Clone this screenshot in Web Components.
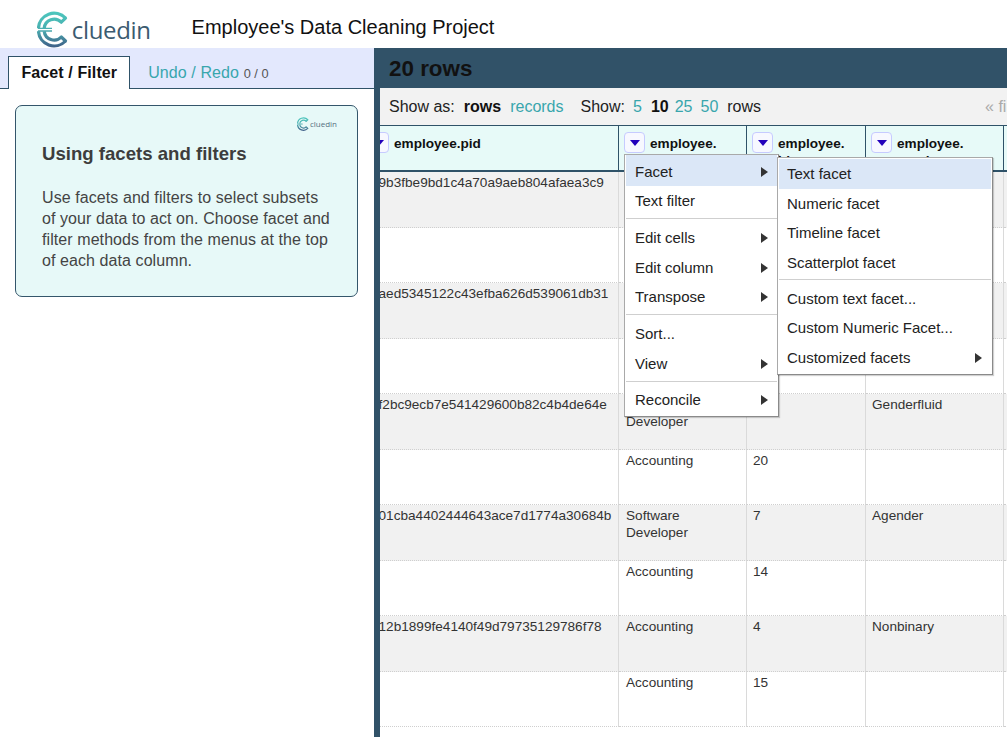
<!DOCTYPE html>
<html lang="en">
<head>
<meta charset="utf-8">
<title>Employee's Data Cleaning Project</title>
<style>
  html, body { margin: 0; height: 737px; overflow: hidden; background: #fff; }
  body { font-family: "Liberation Sans", Arial, sans-serif; color: #222; }
</style>
</head>
<body>
<template id="logo-t">
  <style>
    :host { display: inline-flex; align-items: center; gap: var(--gap, 2.8px); color: #3b5b70; }
    svg { height: var(--h, 37px); width: calc(var(--h, 37px) * .865); display: block; flex: none; }
    span { font: 400 var(--fs, 24px)/1 "Open Sans", sans-serif; letter-spacing: var(--ls, -.35px); }
  </style>
  <svg viewBox="0 0 32 37" aria-hidden="true">
    <path d="M28.5 7.2A15.6 15.6 0 0 0 1.5 17.2" fill="none" stroke="url(#g)" stroke-width="3.2"/>
    <path d="M1.5 20.2A15.6 15.6 0 0 0 28.5 30" fill="none" stroke="url(#g)" stroke-width="3.2"/>
    <path d="M24.3 11.2A10 10 0 0 0 7.2 17.2" fill="none" stroke="url(#g)" stroke-width="3.2"/>
    <path d="M7.2 20.2A10 10 0 0 0 24.3 26" fill="none" stroke="url(#g)" stroke-width="3.2"/>
    <path d="M28.5 7.2L24.3 11.2M28.5 30L24.3 26" fill="none" stroke="url(#g)" stroke-width="3.2" stroke-linecap="round"/>
    <path d="M1 17.4H15M1 20H15" stroke="url(#g)" stroke-width="1.3"/>
    <defs>
      <linearGradient id="g" gradientUnits="userSpaceOnUse" x1="0" y1="1" x2="0" y2="36">
        <stop offset="0" stop-color="#4cc6bd"/><stop offset=".5" stop-color="#4aaeb0"/><stop offset="1" stop-color="#3f5f88"/>
      </linearGradient>
    </defs>
  </svg>
  <span>cluedin</span>
</template>

<template id="header-t">
  <style>
    :host { display: flex; align-items: center; height: 48px; padding: 6px 0 0 37px; box-sizing: border-box; background: #fff; }
    h1 { margin: 0 0 0 41px; font: 400 20px/1 "Liberation Sans", Arial, sans-serif; color: #111; white-space: nowrap; }
    cd-logo { position: relative; top: 2.5px; }
  </style>
  <cd-logo></cd-logo>
  <h1><slot></slot></h1>
</template>

<template id="tabs-t">
  <style>
    :host { display: block; width: 374px; flex: none; background: #fff; }
    .bar { display: flex; height: 41px; box-sizing: border-box; padding: 8px 0 0 8px; background: #e3e8fd; border-bottom: 1px solid #2f5268; }
    .tab { height: 33px; box-sizing: border-box; padding: 7px 12px 0 12.5px; font: 700 16px/18px "Liberation Sans", Arial, sans-serif; color: #111; background: #fff; border: 1px solid #2f5268; border-bottom: 0; letter-spacing: .1px; }
    .other { margin-left: 18px; padding-top: 8px; font: 400 16px/18px "Liberation Sans", Arial, sans-serif; color: #38a6ad; letter-spacing: .1px; }
    .other small { font-size: 12.8px; color: #555; letter-spacing: 0; }
    .body { padding: 16px 16px 0 15px; }
  </style>
  <div class="bar">
    <div class="tab">Facet / Filter</div>
    <div class="other">Undo / Redo <small>0 / 0</small></div>
  </div>
  <div class="body"><slot></slot></div>
</template>

<template id="card-t">
  <style>
    :host { display: block; box-sizing: border-box; height: 192px; background: #e7f9f8; border: 1px solid #34566b; border-radius: 7px; padding: 11px 20px 0 26px; color: #444; }
    .top { display: flex; justify-content: flex-end; }
    cd-logo { --h: 14px; --fs: 8px; --ls: 0; --gap: 1px; color: #55707f; }
    h3 { margin: 10px 0 0; font: 700 18.6px/26px "Liberation Sans", Arial, sans-serif; color: #3d3d3d; }
    p { margin: 20px 5px 0 0; font: 400 16px/21px "Liberation Sans", Arial, sans-serif; letter-spacing: .08px; }
  </style>
  <div class="top"><cd-logo></cd-logo></div>
  <h3><slot name="title"></slot></h3>
  <p><slot></slot></p>
</template>

<template id="toolbar-t">
  <style>
    :host { display: flex; align-items: center; height: 37px; box-sizing: border-box; padding-left: 9px; background: #f2f2f2; font: 400 16px/20px "Liberation Sans", Arial, sans-serif; color: #222; white-space: nowrap; overflow: hidden; }
    b { color: #111; }
    .l { color: #38a6ad; }
    .g { color: #aaa; }
    span, b { flex: none; }
  </style>
  <span>Show as:</span>
  <b style="margin-left:9px">rows</b>
  <span class="l" style="margin-left:9px">records</span>
  <span style="margin-left:17px">Show:</span>
  <span class="l" style="margin-left:8px">5</span>
  <b style="margin-left:9px">10</b>
  <span class="l" style="margin-left:6px">25</span>
  <span class="l" style="margin-left:8px">50</span>
  <span style="margin-left:9px">rows</span>
  <span class="g" style="margin-left:224px">« first</span>
</template>

<template id="colhead-t">
  <style>
    :host { display: flex; align-items: flex-start; box-sizing: border-box; height: 47px; overflow: hidden; background: #e7faf8; border-top: 1px solid #2f5268; border-bottom: 2px solid #2f5268; border-right: 1px solid #2f5268; padding: 6px 0 0 5px; font: 700 13.6px/17px "Liberation Sans", Arial, sans-serif; color: #111; }
    .btn { flex: none; width: 21px; height: 21px; box-sizing: border-box; margin-right: 5px; background: #f7f8ff; border: 1.5px solid #c6cbff; border-radius: 4px; display: flex; align-items: center; justify-content: center; }
    .btn i { display: block; width: 0; height: 0; border-left: 5.5px solid transparent; border-right: 5.5px solid transparent; border-top: 6.5px solid #2200bb; margin-top: 1px; }
    .t { padding-top: 3px; }
  </style>
  <div class="btn"><i></i></div>
  <div class="t"><slot></slot></div>
</template>

<template id="cell-t">
  <style>
    :host { display: block; box-sizing: border-box; height: 55.5px; padding: 2px 7px 0 var(--pl, 6px); overflow: hidden; border-right: 1px solid #dadada; border-bottom: 1px dotted #cfcfcf; font: 400 13.6px/17px "Liberation Sans", Arial, sans-serif; color: #333; }
    :host([odd]) { background: #f1f1f1; }
    :host([bare]) { border-right: 0; padding: 2px 0 0; }
  </style>
  <slot></slot>
</template>

<template id="menu-t">
  <style>
    :host { display: block; position: absolute; box-sizing: border-box; background: #fff; border: 1px solid #a9a9a9; border-right-color: #8a8a8a; border-bottom-color: #8a8a8a; box-shadow: 1px 1px 1px rgba(0,0,0,.18); padding: 0 1px; font: 400 15px/20px "Liberation Sans", Arial, sans-serif; color: #222; z-index: 3; }
  </style>
  <slot></slot>
</template>

<template id="item-t">
  <style>
    :host { display: flex; align-items: center; justify-content: space-between; box-sizing: border-box; height: 29.5px; padding: 1px 9px 0 var(--pl, 9px); white-space: nowrap; }
    :host([hl]) { background: #dbe7f7; }
    i { display: none; width: 0; height: 0; border-top: 5.5px solid transparent; border-bottom: 5.5px solid transparent; border-left: 7px solid #333; }
    :host([sub]) i { display: block; }
  </style>
  <span><slot></slot></span><i></i>
</template>

<template id="sep-t">
  <style>
    :host { display: block; height: 1px; margin: 2.9px 0 3.5px; background: #cfcfcf; }
  </style>
</template>

<template id="panel-t">
  <style>
    :host { display: block; position: relative; flex: 1; min-width: 0; height: 689px; box-sizing: border-box; border-left: 6px solid #315268; background: #fff; overflow: hidden; }
    .top { height: 40px; box-sizing: border-box; padding-left: 9px; background: #315268; font: 700 22.4px/42px "Liberation Sans", Arial, sans-serif; color: #111; }
  </style>
  <div class="top"><slot name="count"></slot></div>
  <slot></slot>
</template>

<template id="table-t">
  <style>
    :host { display: block; overflow: hidden; }
    .grid { display: grid; grid-template-columns: 256px 128px 119px 138px 60px; margin-left: -17px; width: 701px; }
  </style>
  <div class="grid"><slot></slot></div>
</template>

<app-shell>
  <app-header>Employee's Data Cleaning Project</app-header>
  <main style="display:flex">
    <side-tabs>
      <help-card>
        <span slot="title">Using facets and filters</span>
        Use facets and filters to select subsets of your data to act on. Choose facet and filter methods from the menus at the top of each data column.
      </help-card>
    </side-tabs>
    <data-panel>
      <span slot="count">20 rows</span>
      <view-toolbar></view-toolbar>
      <data-table id="tbl"></data-table>
      <pop-menu style="left:244px;top:106px;width:154.5px;height:263px">
        <menu-row hl sub style="height:31px;padding-top:3px">Facet</menu-row>
        <menu-row>Text filter</menu-row>
        <menu-sep></menu-sep>
        <menu-row sub>Edit cells</menu-row>
        <menu-row sub>Edit column</menu-row>
        <menu-row sub>Transpose</menu-row>
        <menu-sep></menu-sep>
        <menu-row>Sort...</menu-row>
        <menu-row sub>View</menu-row>
        <menu-sep></menu-sep>
        <menu-row sub>Reconcile</menu-row>
      </pop-menu>
      <pop-menu style="left:397px;top:109px;width:216px;height:218px;padding-top:1px;--pl:8px">
        <menu-row hl>Text facet</menu-row>
        <menu-row>Numeric facet</menu-row>
        <menu-row>Timeline facet</menu-row>
        <menu-row>Scatterplot facet</menu-row>
        <menu-sep style="margin-top:1.9px"></menu-sep>
        <menu-row>Custom text facet...</menu-row>
        <menu-row>Custom Numeric Facet...</menu-row>
        <menu-row sub>Customized facets</menu-row>
      </pop-menu>
    </data-panel>
  </main>
</app-shell>

<script>
  function def(name, tpl, setup) {
    customElements.define(name, class extends HTMLElement {
      constructor() {
        super();
        const r = this.attachShadow({ mode: 'open' });
        r.appendChild(document.getElementById(tpl).content.cloneNode(true));
      }
      connectedCallback() { if (setup && !this._d) { this._d = 1; setup(this); } }
    });
  }
  customElements.define('app-shell', class extends HTMLElement {
    constructor() {
      super();
      const r = this.attachShadow({ mode: 'open' });
      r.innerHTML = '<style>:host{display:block;height:737px;overflow:hidden}</style><slot></slot>';
    }
  });
  def('cd-logo', 'logo-t');
  def('app-header', 'header-t');
  def('side-tabs', 'tabs-t');
  def('help-card', 'card-t');
  def('view-toolbar', 'toolbar-t');
  def('col-head', 'colhead-t');
  def('data-cell', 'cell-t');
  def('pop-menu', 'menu-t');
  def('menu-row', 'item-t');
  def('menu-sep', 'sep-t');
  def('data-panel', 'panel-t');
  def('data-table', 'table-t', el => {
    const heads = ['employee.pid', 'employee.<br>job_title', 'employee.<br>id', 'employee.<br>gender', ''];
    const rows = [
      ['e9b3fbe9bd1c4a70a9aeb804afaea3c9', '', '', ''],
      ['', '', '', ''],
      ['6aed5345122c43efba626d539061db31', '', '', ''],
      ['', '', '', ''],
      ['6f2bc9ecb7e541429600b82c4b4de64e', 'Software Developer', '', 'Genderfluid'],
      ['', 'Accounting', '20', ''],
      ['801cba4402444643ace7d1774a30684b', 'Software Developer', '7', 'Agender'],
      ['', 'Accounting', '14', ''],
      ['312b1899fe4140f49d79735129786f78', 'Accounting', '4', 'Nonbinary'],
      ['', 'Accounting', '15', '']
    ];
    const pads = ['8px', '7px', '6px', '6px'];
    let h = '';
    heads.forEach((t, i) => {
      h += i === 4 ? '<col-head style="border-right:0"></col-head>' : `<col-head>${t}</col-head>`;
    });
    rows.forEach((r, n) => {
      const odd = n % 2 === 0 ? ' odd' : '';
      r.forEach((c, i) => { h += `<data-cell${odd} style="--pl:${pads[i]}">${c}</data-cell>`; });
      h += `<data-cell${odd} bare></data-cell>`;
    });
    el.innerHTML = h;
  });
</script>
</body>
</html>
